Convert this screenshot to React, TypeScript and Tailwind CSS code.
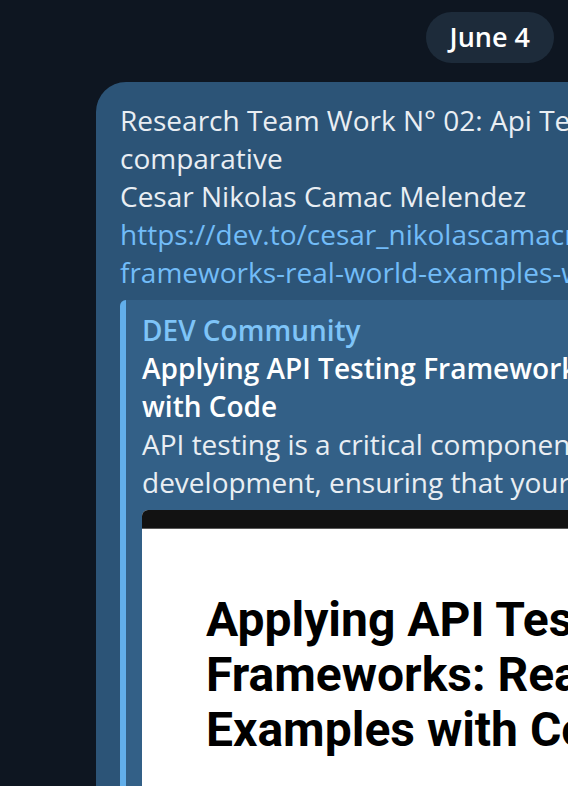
import React from 'react';

export default function App() {
  return (
    <div
      className="relative w-[568px] h-[786px] overflow-hidden bg-[#0e1621] text-[#e9eef3]"
      style={{ fontFamily: '"Open Sans", "Noto Sans", sans-serif' }}
    >
      {/* Date pill */}
      <div className="flex justify-end pt-[12px] pr-[14px]">
        <div className="h-[51px] px-[24px] flex items-center rounded-full bg-[#1d2b3a] text-[27px] font-semibold text-white">
          June 4
        </div>
      </div>

      {/* Message bubble */}
      <div className="ml-[96px] mt-[19px] w-[720px] rounded-tl-[30px] bg-[#2c5477] pl-[24px] pt-[19px] pb-[40px]">
        <div className="text-[28px] leading-[38px] whitespace-nowrap">
          <div>Research Team Work N° 02: Api Testing frameworks</div>
          <div>comparative</div>
          <div>Cesar Nikolas Camac Melendez</div>
          <div className="text-[#72bcf8]">https://dev.to/cesar_nikolascamacmelendez/applying-api-testing-</div>
          <div className="text-[#72bcf8]">frameworks-real-world-examples-with-code</div>
        </div>

        {/* Link preview */}
        <div className="mt-[9px] flex rounded-l-[6px] overflow-hidden bg-[#336087]">
          <div className="w-[6px] shrink-0 bg-[#62afeb]" />
          <div className="pl-[16px] pt-[11px] flex-1 text-[28px] leading-[38px] whitespace-nowrap">
            <div className="font-semibold text-[#7ec4f8]">DEV Community</div>
            <div className="font-semibold text-white">Applying API Testing Frameworks: Real-World Examples</div>
            <div className="font-semibold text-white">with Code</div>
            <div>API testing is a critical component of modern software</div>
            <div>development, ensuring that your application functions</div>

            {/* Preview image */}
            <div className="mt-[9px] rounded-tl-[6px] overflow-hidden bg-white">
              <div className="h-[19px] bg-[#121212] border-b border-[#5a5a5a]" />
              <div
                className="pl-[64px] pt-[63px] pb-[40px] text-[48px] leading-[55px] font-bold text-black"
                style={{ fontFamily: 'Roboto, "Liberation Sans", sans-serif' }}
              >
                <div>Applying API Testing</div>
                <div>Frameworks: Real-World</div>
                <div>Examples with Code</div>
              </div>
            </div>
          </div>
        </div>
      </div>
    </div>
  );
}
